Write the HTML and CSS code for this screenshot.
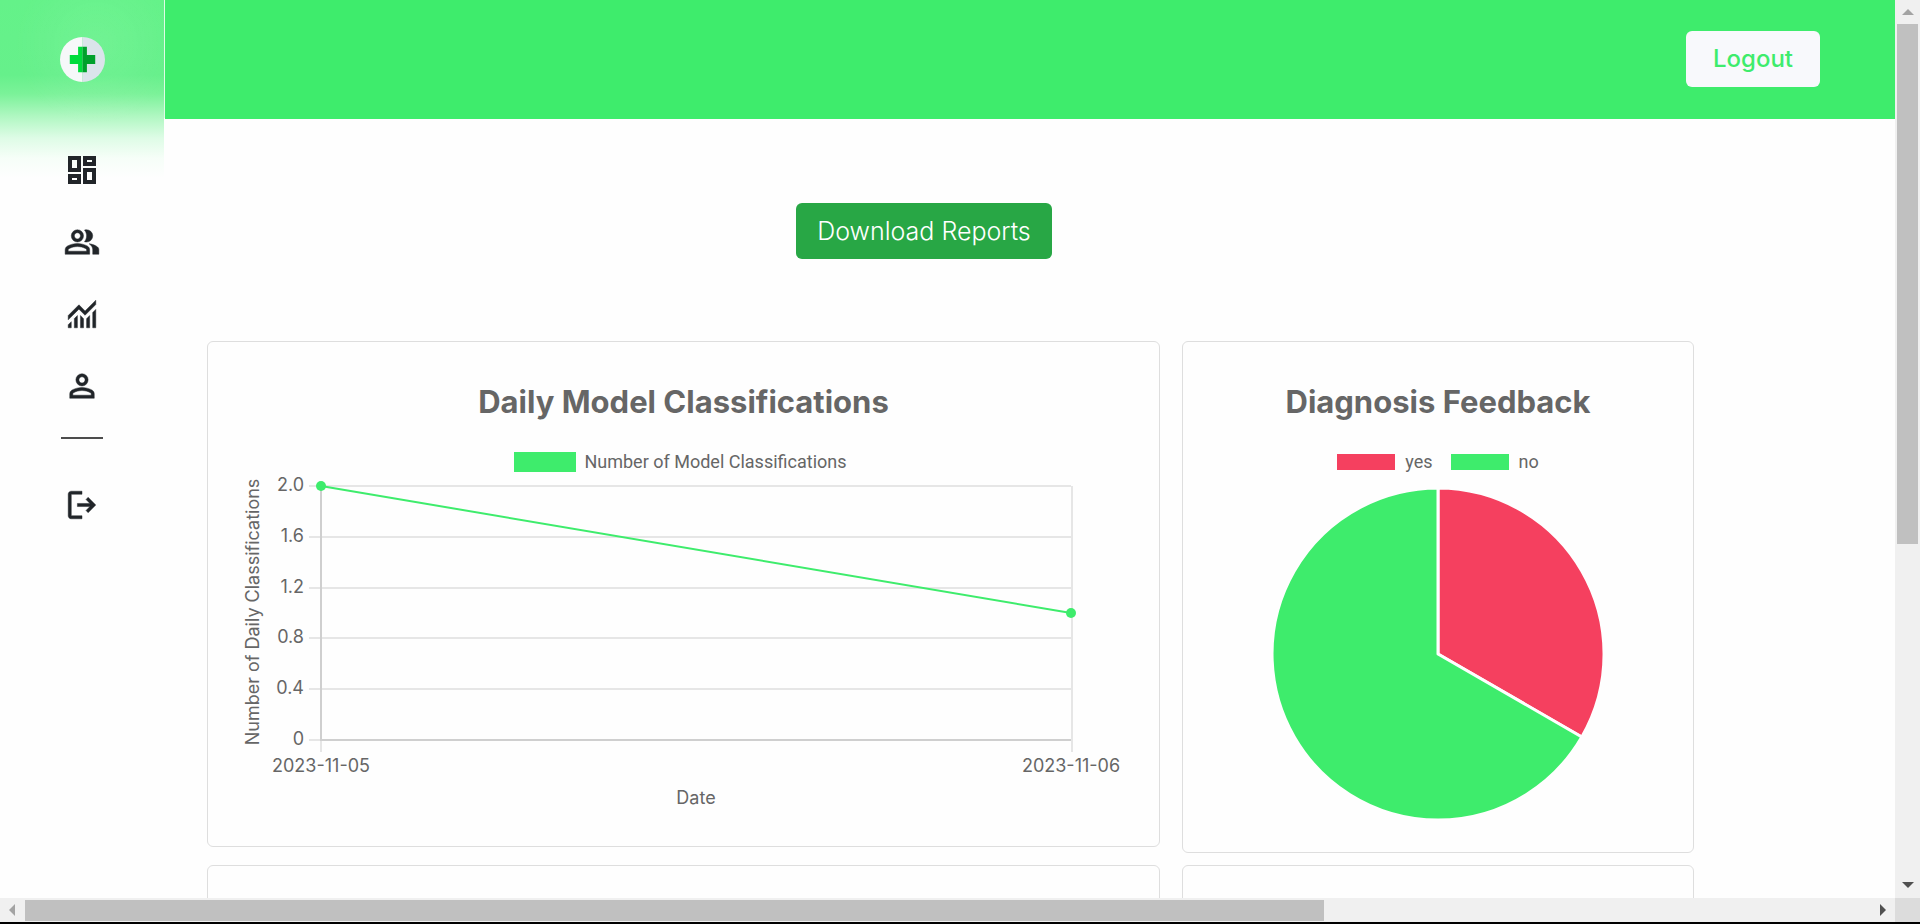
FILE: index.html
```html
<!DOCTYPE html>
<html lang="en">
<head>
<meta charset="utf-8">
<meta name="viewport" content="width=device-width, initial-scale=1">
<title>Dashboard</title>
<link rel="stylesheet" href="styles.css">
</head>
<body>
<div class="window">
  <div class="page">
    <aside class="sidebar">
      <a class="logo" href="#" aria-label="Home">
        <svg width="45" height="45" viewBox="0 0 46 46" aria-hidden="true">
          <path fill="#f6f8f9" d="M23 0a23 23 0 0 0 0 46z"/>
          <path fill="#dbe4eb" d="M23 0a23 23 0 0 1 0 46z"/>
          <path fill="#00dc3c" d="M23 10h-4.500v8.500h-8.500v9h8.500v8.500H23z"/>
          <path fill="#00a02c" d="M23 10h4.500v8.500h8.500v9h-8.500v8.500H23z"/>
        </svg>
      </a>
      <nav class="nav" aria-label="Main">
        <a href="#" aria-label="Dashboard"><svg width="28" height="28" viewBox="0 0 28 28"><path fill-rule="evenodd" d="M0 0h13v16H0zM4 4v8h5V4zM15 0h13v10H15zM19 4v2h5V4zM0 18h13v10H0zM4 22v2h5v-2zM15 12h13v16H15zM19 16v8h5v-8z"/></svg></a>
        <a href="#" aria-label="Users"><svg class="symbol" width="36" height="36" viewBox="10 -950 940 940"><path d="M40-160v-112q0-34 17.500-62.500T104-378q62-31 126-46.500T360-440q66 0 130 15.500T616-378q29 15 46.500 43.500T680-272v112H40Zm720 0v-120q0-44-24.500-84.500T666-434q51 6 96 20.500t84 35.500q36 20 55 44.500t19 53.500v120H760ZM360-480q-66 0-113-47t-47-113q0-66 47-113t113-47q66 0 113 47t47 113q0 66-47 113t-113 47Zm400-160q0 66-47 113t-113 47q-11 0-28-2.500t-28-5.500q27-32 41.500-71t14.500-81q0-42-14.500-81T544-792q14-5 28-6.500t28-1.500q66 0 113 47t47 113ZM120-240h480v-32q0-11-5.500-20T580-306q-54-27-109-40.500T360-360q-56 0-111 13.500T140-306q-9 5-14.500 14t-5.500 20v32Zm240-320q33 0 56.500-23.500T440-640q0-33-23.500-56.500T360-720q-33 0-56.500 23.500T280-640q0 33 23.500 56.500T360-560Z"/></svg></a>
        <a href="#" aria-label="Statistics"><svg class="symbol" width="36" height="36" viewBox="10 -950 940 940"><path d="M120-120v-80l80-80v160h-80Zm160 0v-240l80-80v320h-80Zm160 0v-320l80 81v239h-80Zm160 0v-239l80-80v319h-80Zm160 0v-400l80-80v480h-80ZM120-327v-113l280-280 160 160 280-280v113L560-447 400-607 120-327Z"/></svg></a>
        <a href="#" aria-label="Profile"><svg class="symbol" width="36" height="36" viewBox="10 -950 940 940"><path d="M480-480q-66 0-113-47t-47-113q0-66 47-113t113-47q66 0 113 47t47 113q0 66-47 113t-113 47ZM160-160v-112q0-34 17.500-62.500T224-378q62-31 126-46.500T480-440q66 0 130 15.500T736-378q29 15 46.500 43.500T800-272v112H160Zm80-80h480v-32q0-11-5.500-20T700-306q-54-27-109-40.500T480-360q-56 0-111 13.500T260-306q-9 5-14.500 14t-5.500 20v32Zm240-320q33 0 56.500-23.500T560-640q0-33-23.500-56.500T480-720q-33 0-56.500 23.500T400-640q0 33 23.500 56.500T480-560Z"/></svg></a>
        <hr class="divider">
        <a href="#" aria-label="Log out"><svg class="symbol" width="36" height="36" viewBox="10 -950 940 940"><path d="M200-120q-33 0-56.500-23.500T120-200v-560q0-33 23.500-56.500T200-840h280v80H200v560h280v80H200Zm440-160-55-58 102-102H360v-80h327L585-622l55-58 200 200-200 200Z"/></svg></a>
      </nav>
    </aside>
    <div class="content">
      <header class="topbar"><button class="btn btn-light" type="button">Logout</button></header>
      <main class="main">
        <div class="actions"><button class="btn btn-success" type="button">Download Reports</button></div>
        <div class="cards">
          <section class="card">
            <h2>Daily Model Classifications</h2>
            <div class="legend legend-line"><span class="key"><i class="swatch swatch-line"></i>Number of Model Classifications</span></div>
            <svg class="chart" viewBox="0 0 951 372" role="img" aria-label="Daily model classifications">
              <path class="grid" d="M101 12H863M101 63H863M101 114H863M101 164H863M101 215H863M101 266H113M113 266V278M864 12V278"/>
              <path class="axis" d="M113 12V266H863"/>
              <path class="series" d="M113 12 863 139"/>
              <circle class="point" cx="113" cy="12" r="5"/>
              <circle class="point" cx="863" cy="139" r="5"/>
              <g class="end">
                <text x="96" y="17">2.0</text><text x="96" y="68">1.6</text><text x="96" y="119">1.2</text>
                <text x="96" y="169">0.8</text><text x="96" y="220">0.4</text><text x="96" y="271">0</text>
              </g>
              <g class="middle">
                <text x="113" y="298">2023-11-05</text><text x="863" y="298">2023-11-06</text>
                <text x="488" y="330">Date</text>
                <text transform="translate(51 138) rotate(-90)">Number of Daily Classifications</text>
              </g>
            </svg>
          </section>
          <section class="card">
            <h2>Diagnosis Feedback</h2>
            <div class="legend legend-pie"><span class="key"><i class="swatch swatch-yes"></i>yes</span><span class="key"><i class="swatch swatch-no"></i>no</span></div>
            <svg class="chart" viewBox="0 0 510 378" role="img" aria-label="Diagnosis feedback">
              <path class="slice slice-yes" d="M255 180V14A166 166 0 0 1 398.800 263z"/>
              <path class="slice slice-no" d="M255 180 398.800 263A166 166 0 1 1 255 14z"/>
            </svg>
          </section>
          <section class="card card-next"></section>
          <section class="card card-next"></section>
        </div>
      </main>
    </div>
  </div>
  <div class="scroll scroll-y" aria-hidden="true">
    <svg class="arrow" width="12" height="6" viewBox="0 0 12 6"><path fill="#a3a3a3" d="M0 6 6 0l6 6z"/></svg>
    <div class="thumb"></div>
    <svg class="arrow arrow-last" width="12" height="6" viewBox="0 0 12 6"><path fill="#505050" d="M0 0h12L6 6z"/></svg>
  </div>
  <div class="scroll scroll-x" aria-hidden="true">
    <svg class="arrow" width="6" height="12" viewBox="0 0 6 12"><path fill="#a3a3a3" d="M6 0v12L0 6z"/></svg>
    <div class="thumb"></div>
    <svg class="arrow arrow-last" width="6" height="12" viewBox="0 0 6 12"><path fill="#505050" d="M0 0v12l6-6z"/></svg>
  </div>
  <div class="corner"></div>
</div>
</body>
</html>
```
FILE: styles.css
```css
:root {
  --green: #3eec6c;
  --red: #f5405f;
  --ink: #212529;
  --muted: #666;
}
* { box-sizing: border-box; }
body {
  margin: 0;
  font-family: Inter, "Liberation Sans", sans-serif;
  color: var(--ink);
  background: #fefefe;
}
.window {
  display: grid;
  grid-template: minmax(0, 1fr) 24px / minmax(0, 1fr) 25px;
  height: 100vh;
  border-bottom: 2px solid #000;
}
.page {
  display: grid;
  grid-template-columns: 165px minmax(0, 1fr);
  overflow: hidden;
}

.sidebar {
  border-right: 1px solid #dffbe6;
  border-image: linear-gradient(#dffbe6 0 119px, #fefefe 119px) 1;
  background:
    radial-gradient(circle at 96px 44px, #ffffff14 0, #ffffff00 80px),
    linear-gradient(#64f289 0, #66f08b 75px, #7bf299 94px, #aff7c1 116px, #defce6 138px, #f6fef8 158px, #fefefe 178px);
}
.logo {
  display: grid;
  place-items: center;
  height: 119px;
}
.nav {
  display: flex;
  flex-direction: column;
  align-items: center;
  margin-top: 15px;
}
.nav a {
  display: grid;
  place-items: center;
  width: 72px;
  height: 72px;
  fill: var(--ink);
}
.symbol {
  stroke: var(--ink);
  stroke-width: 12;
}
.divider {
  width: 42px;
  height: 2px;
  margin: 15px 0 30px;
  border: 0;
  background: #4d4d4d;
}

.topbar {
  display: flex;
  align-items: center;
  justify-content: flex-end;
  height: 119px;
  padding: 0 75px 1px 0;
  background: var(--green);
}
.btn {
  height: 56px;
  border: 0;
  border-radius: 6px;
  font: 400 24px/36px Inter, "Liberation Sans", sans-serif;
}
.btn-light {
  padding: 0 27px;
  color: var(--green);
  background: #f8f9fc;
  font-weight: 500;
}
.btn-success {
  padding: 0 21px;
  color: #fff;
  background: #28a745;
  font-size: 25px;
  font-weight: 300;
}
.main { padding: 84px 201px 0 42px; }
.actions {
  display: flex;
  justify-content: center;
  padding: 0 53px 82px 0;
}
.cards {
  display: grid;
  grid-template-columns: 953fr 512fr;
  gap: 12px 22px;
  align-items: start;
}
.card {
  padding-top: 40px;
  border: 1px solid #dedede;
  border-radius: 6px;
}
.card-next { height: 500px; }
.card h2 {
  margin: 0 0 28px;
  font-size: 31px;
  line-height: 40px;
  text-align: center;
  color: var(--muted);
}
.legend {
  display: flex;
  justify-content: center;
  gap: 18px;
  height: 24px;
  font: 400 18px/24px Roboto, "Liberation Sans", sans-serif;
  color: var(--muted);
}
.legend-line { padding-right: 6px; }
.key {
  display: flex;
  align-items: center;
  gap: 8px;
}
.legend-pie .key { gap: 10px; }
.swatch {
  width: 58px;
  height: 16px;
  background: var(--green);
}
.swatch-line {
  width: 62px;
  height: 20px;
}
.swatch-yes { background: var(--red); }

.chart {
  display: block;
  width: 100%;
  height: auto;
  font-size: 18px;
  fill: var(--muted);
}
.grid, .axis, .series { fill: none; }
.grid { stroke: #e6e6e6; stroke-width: 2; }
.axis { stroke: #cfcfcf; stroke-width: 2; }
.series { stroke: var(--green); stroke-width: 2; }
.point { fill: var(--green); }
.end { text-anchor: end; }
.middle { text-anchor: middle; }
.slice { stroke: #fefefe; stroke-width: 3; stroke-linejoin: round; }
.slice-yes { fill: var(--red); }
.slice-no { fill: var(--green); }

.scroll {
  display: flex;
  align-items: center;
  background: #f0f0f0;
}
.scroll-y {
  flex-direction: column;
  padding: 9px 0 10px;
}
.scroll-x { padding: 0 9px; }
.arrow { flex: none; }
.arrow-last { margin: auto 0 0; }
.scroll-x .arrow-last { margin: 0 0 0 auto; }
.thumb { background: #c0c0c0; }
.scroll-y .thumb {
  width: 21px;
  height: 59.2%;
  margin-top: 9px;
}
.scroll-x .thumb {
  width: 69.2%;
  height: 21px;
  margin-left: 10px;
}
.corner { background: #dcdcdc; }
```
